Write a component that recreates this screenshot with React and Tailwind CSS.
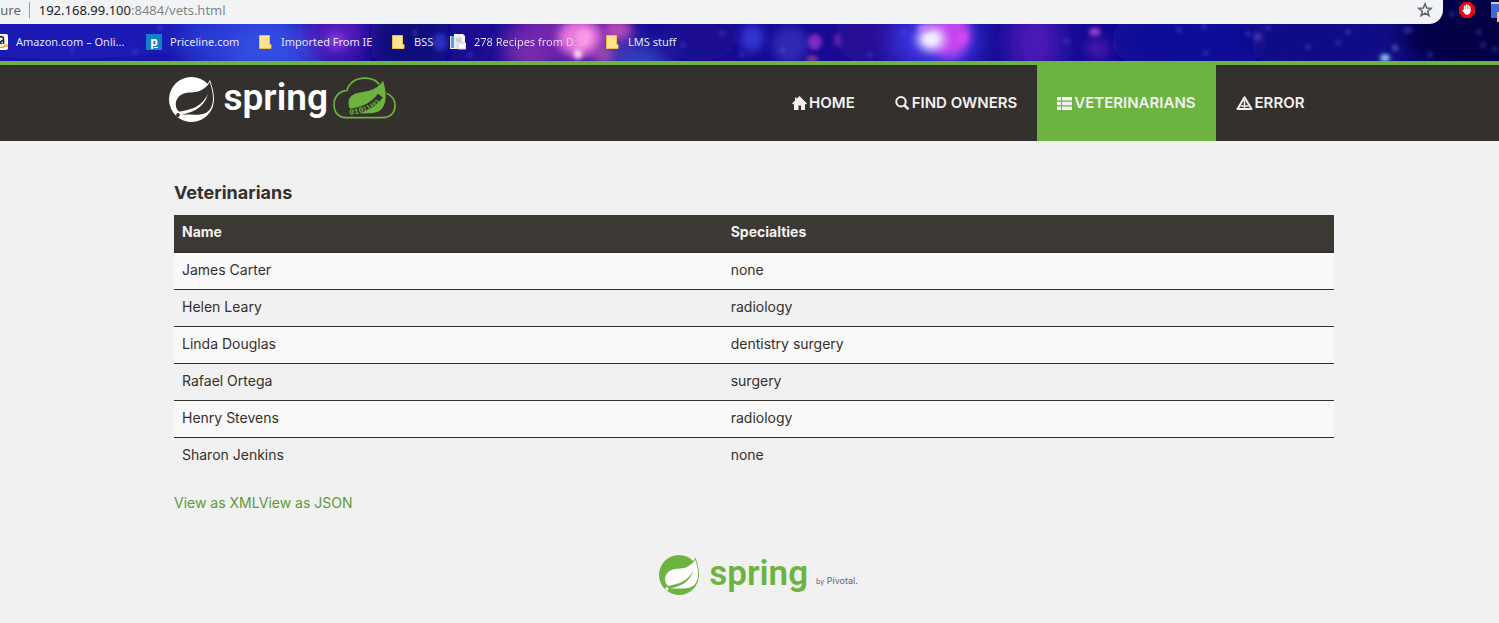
const vets = [
  ["James Carter", "none"],
  ["Helen Leary", "radiology"],
  ["Linda Douglas", "dentistry surgery"],
  ["Rafael Ortega", "surgery"],
  ["Henry Stevens", "radiology"],
  ["Sharon Jenkins", "none"],
];

// cx, cy, rx, ry, colour, opacity
const clouds = [
  [60, 30, 220, 40, "#1a1fb8", 0.9],
  [240, 40, 60, 40, "#2c3cd8", 0.9],
  [275, 50, 50, 30, "#3450e4", 0.9],
  [340, 35, 34, 26, "#5a1cc0", 0.95],
  [336, 41, 9, 8, "#a848ec", 0.7],
  [410, 40, 40, 40, "#0a0a78", 0.9],
  [440, 42, 8, 9, "#3448e0", 0.6],
  [470, 40, 20, 40, "#1c0c90", 0.9],
  [530, 52, 26, 18, "#9a3cb0", 0.9],
  [570, 35, 60, 30, "#7a28b0", 0.9],
  [580, 38, 22, 18, "#e878dc", 1],
  [578, 54, 4, 5, "#ffd8f8", 1],
  [584, 38, 8, 9, "#ffa8ec", 0.7],
  [618, 30, 14, 10, "#c850b8", 0.9],
  [604, 55, 10, 10, "#c050a8", 0.8],
  [640, 60, 34, 14, "#4058d0", 0.9],
  [700, 36, 40, 25, "#1c0a90", 0.9],
  [752, 38, 12, 14, "#3838d8", 0.9],
  [790, 45, 18, 18, "#3a34c0", 0.7],
  [815, 42, 7, 8, "#9c34d4", 0.8],
  [838, 40, 4, 7, "#9a34cc", 0.8],
  [812, 59, 6, 3, "#b84898", 0.8],
  [870, 35, 35, 30, "#2a0c94", 0.9],
  [935, 40, 46, 34, "#4038e8", 0.9],
  [950, 34, 20, 24, "#c044f0", 1],
  [931, 39, 14, 12, "#e8d8ff", 1],
  [931, 39, 7, 6, "#f4f0ff", 0.9],
  [925, 28, 8, 4, "#e080f8", 0.7],
  [962, 38, 6, 6, "#dc48f0", 0.8],
  [1035, 42, 26, 34, "#5a1cc0", 0.8],
  [1095, 32, 6, 4, "#b850d0", 0.9],
  [1100, 48, 14, 10, "#5c1cb0", 0.7],
  [1190, 40, 80, 34, "#0c0c98", 0.9],
  [1258, 37, 4, 4, "#7a48e8", 0.9],
  [1330, 40, 80, 40, "#08087c", 0.6],
  [1480, 30, 80, 50, "#06063c", 0.9],
  [1385, 58, 5, 4, "#90c8f0", 1],
  [1395, 48, 3, 3, "#5068c8", 0.9],
  [1408, 30, 5, 3, "#4434b8", 0.8],
];

const stars = [
  [72, 50], [135, 52], [160, 28], [415, 33], [470, 55], [683, 45], [722, 33],
  [742, 55], [783, 50], [904, 32], [870, 55], [954, 55], [1066, 41], [1179, 30],
  [1204, 27], [1206, 53], [1248, 34], [1268, 28], [1308, 47], [1338, 43],
  [1348, 32], [1430, 55], [1452, 14], [1479, 32], [1483, 45], [1495, 49],
];

const RING =
  "M21.8537 1.4158a10.4504 10.4504 0 0 1-1.284 2.2471A11.9666 11.9666 0 1 0 3.8518 20.7757l.4445.3951a11.9543 11.9543 0 0 0 19.6316-8.2971c.3457-3.0126-.568-6.8649-2.0742-11.458z";
const DOT =
  "M5.5805 20.8745a1.0174 1.0174 0 1 1-.1482-1.4323 1.0396 1.0396 0 0 1 .1482 1.4323z";
const LEAF =
  "M21.7796 17.2939c-2.9385 3.9263-9.2601 2.5928-13.2852 2.7904 0 0-.7161.0494-1.4323.1481 0 0 .2717-.1234.6174-.2469 2.8398-.9877 4.1732-1.1853 5.9018-2.0743 3.2349-1.6545 6.4698-5.2844 7.1118-9.0379-1.2347 3.6053-4.9881 6.7167-8.3959 7.9761-2.3459.8643-6.5685 1.7039-6.5685 1.7039l-.1729-.0988c-2.8645-1.4076-2.9632-7.6304 2.2718-9.6306 2.2966-.889 4.4696-.395 6.9637-.9877 2.6422-.6174 5.7043-2.5929 6.939-5.1857 1.3828 4.1732 3.062 10.643.0493 14.6434z";

function SpringMark({ className, ring, leaf }) {
  return (
    <svg viewBox="0 0 24 24" className={className} aria-hidden="true">
      <path d={RING} fill={ring} />
      <path d={DOT} fill={leaf} />
      <path d={LEAF} fill={leaf} />
    </svg>
  );
}

function CloudMark() {
  return (
    <svg viewBox="0 0 190 126" className="h-[42px] w-[63px]" aria-hidden="true">
      <path
        d="M38 122 C18 122 3 108 3 82 C3 58 20 42 42 40 C48 18 68 3 96 3 C122 3 142 14 148 44 C172 50 187 64 187 86 C187 108 172 122 150 122 Z"
        fill="none"
        stroke="#6db33f"
        strokeWidth="5"
      />
      <path
        d="M151 7 C164 44 166 84 142 102 C130 111 108 111 84 111 L50 96 C42 82 42 60 64 50 C86 40 132 46 151 7 Z"
        fill="#6db33f"
        stroke="#34302d"
        strokeWidth="3"
      />
      <path d="M44 105 Q108 102 143 56" fill="none" stroke="#34302d" strokeWidth="18" />
      <path id="bits" d="M50 114 Q112 110 152 58" fill="none" />
      <text fill="#6db33f" className="font-['Liberation_Mono',monospace] font-bold">
        <textPath href="#bits">
          <tspan fontSize="25">010</tspan>
          <tspan fontSize="21">11</tspan>
          <tspan fontSize="17">001</tspan>
        </textPath>
      </text>
    </svg>
  );
}

function HomeIcon() {
  return (
    <svg viewBox="0 0 15 14" className="h-[14px] w-[15px]" fill="currentColor" aria-hidden="true">
      <path d="M7.5 0 15 7.5l-.8.8H13V14H9V9.500H6.500V14H2V8.300H.8L0 7.500 3 4.500V1.500h1.500v1.500z" />
    </svg>
  );
}

function SearchIcon() {
  return (
    <svg viewBox="0 0 15 14" className="h-[14px] w-[15px]" fill="none" stroke="currentColor" aria-hidden="true">
      <circle cx="6" cy="5.800" r="4.700" strokeWidth="2" />
      <path d="m9.500 9.300 4 4" strokeWidth="2.600" />
    </svg>
  );
}

function ListIcon() {
  return (
    <svg viewBox="0 0 15 13" className="h-[13px] w-[15px]" fill="currentColor" aria-hidden="true">
      <path d="M0 0h4v3.500H0zM5 0h10v3.500H5zM0 4.800h4v3.500H0zM5 4.800h10v3.500H5zM0 9.500h4V13H0zM5 9.500h10V13H5z" />
    </svg>
  );
}

function WarningIcon() {
  return (
    <svg viewBox="0 0 17 14" className="h-[14px] w-[17px]" fill="none" stroke="currentColor" aria-hidden="true">
      <path d="M8.500 1.200 15.500 13H1.500z" strokeWidth="2" strokeLinejoin="round" />
      <path d="M8.500 4v9M4.500 10h8" strokeWidth="1.500" />
    </svg>
  );
}

function Folder() {
  return (
    <svg viewBox="0 0 13 14" className="h-[14px] w-[13px]" aria-hidden="true">
      <path d="M.5.5h10v9h1.500v4H.5z" fill="#ffe48f" stroke="#e8bf4a" />
    </svg>
  );
}

function Bookmark({ icon, className, children }) {
  return (
    <a href="#" className={"flex shrink-0 items-center whitespace-nowrap " + className}>
      {icon}
      {children}
    </a>
  );
}

function hazeFor(rx) {
  if (rx >= 24) return "url(#haze-wide)";
  if (rx >= 9) return "url(#haze)";
  return "url(#glow)";
}

function Galaxy() {
  return (
    <svg
      viewBox="0 0 1499 61"
      preserveAspectRatio="none"
      className="absolute inset-0 h-full w-full"
      aria-hidden="true"
    >
      <defs>
        <filter id="haze-wide" x="-100%" y="-100%" width="300%" height="300%">
          <feGaussianBlur stdDeviation="12" />
        </filter>
        <filter id="haze" x="-100%" y="-100%" width="300%" height="300%">
          <feGaussianBlur stdDeviation="5" />
        </filter>
        <filter id="glow" x="-100%" y="-100%" width="300%" height="300%">
          <feGaussianBlur stdDeviation="2" />
        </filter>
      </defs>
      <rect width="1499" height="61" fill="#160c94" />
      {clouds.map(([cx, cy, rx, ry, fill, opacity], i) => (
        <ellipse key={i} cx={cx} cy={cy} rx={rx} ry={ry} fill={fill} opacity={opacity} filter={hazeFor(rx)} />
      ))}
      {stars.map(([cx, cy], i) => (
        <circle key={i} cx={cx} cy={cy} r="2" fill="#5a60e0" opacity="0.8" filter="url(#glow)" />
      ))}
    </svg>
  );
}

function BrowserBar() {
  return (
    <div className="relative overflow-hidden font-['Noto_Sans',sans-serif]">
      <Galaxy />
      <div className="relative flex h-6 items-start">
        <div className="mr-4 flex h-6 flex-1 items-center rounded-br-[14px] bg-[#f1f3f4] pr-[10px] text-[13px] leading-5">
          <span className="-ml-[6px] pb-1 text-[#5f6368]">cure</span>
          <span className="mr-[9px] mb-1 ml-2 h-4 w-px bg-[#9aa0a6]" />
          <span className="flex-1 pb-1 text-[#80868b]">
            <span className="text-[#202124]">192.168.99.100</span>:8484/vets.html
          </span>
          <button type="button" aria-label="Bookmark this page" className="pb-1">
            <svg viewBox="0 0 16 16" className="size-4" fill="none" stroke="#5f6368" strokeWidth="1.500">
              <path d="m8 1.800 1.700 4.200 4.500.3-3.500 2.900 1.200 4.500L8 11.200l-3.900 2.500 1.200-4.500L1.800 6.300l4.500-.3z" />
            </svg>
          </button>
        </div>
        <button type="button" aria-label="Ad blocker" className="mt-[2px]">
          <svg viewBox="0 0 16 16" className="size-4">
            <path d="M4.700 0h6.600L16 4.700v6.600L11.300 16H4.700L0 11.300V4.700z" fill="#e30b12" />
            <path
              d="M5.500 8.800V4.200M7.300 8V3M9.100 8V3.300M10.900 8.500V4.800M4 8.500l2.300 2.500"
              stroke="#fff"
              strokeWidth="1.400"
              strokeLinecap="round"
            />
            <path d="M4.800 7.500h6.800c0 3.200-.9 5.200-3.200 5.200-2 0-3-1.700-3.600-3.500z" fill="#fff" />
          </svg>
        </button>
        <svg viewBox="0 0 8 22" className="ml-4 h-[22px] w-2" aria-hidden="true">
          <path d="M0 2h8v3H0z" fill="#c8ccd4" />
          <path d="M0 4h8v14H0z" fill="#3a6ad4" />
          <path d="M6 12h2v10H6z" fill="#fbc94a" />
        </svg>
      </div>
      <nav className="relative flex h-[37px] items-center pb-px text-[11px] text-[#e4e4f8]">
        <Bookmark
          className="w-[146px]"
          icon={
            <svg viewBox="0 0 8 16" className="mr-2 h-4 w-2" aria-hidden="true">
              <path d="M0 0h6a2 2 0 0 1 2 2v12a2 2 0 0 1-2 2H0z" fill="#fff" />
              <path d="M0 3c2-1 3.500 0 3.500 2v5M3 6.500C0 6.500 0 10 2 9.500" fill="none" stroke="#222" strokeWidth="1.600" />
              <path d="M0 13.500c3 0 5-1 6.500-2.500M4.500 11H7v2" fill="none" stroke="#f90" strokeWidth="1.200" />
            </svg>
          }
        >
          Amazon.com – Onli...
        </Bookmark>
        <Bookmark
          className="w-[113px]"
          icon={
            <span className="mr-2 flex size-4 items-center justify-center bg-[#1580c4] text-xs leading-4 font-bold text-white underline">
              p
            </span>
          }
        >
          Priceline.com
        </Bookmark>
        <Bookmark className="w-[133px] gap-[9px]" icon={<Folder />}>
          Imported From IE
        </Bookmark>
        <Bookmark className="w-[58px] gap-[9px]" icon={<Folder />}>
          BSS
        </Bookmark>
        <Bookmark
          className="w-[156px]"
          icon={
            <svg viewBox="0 0 16 16" className="mr-2 size-4" aria-hidden="true">
              <path d="M4 0h9l2 2v11H4z" fill="#f4f4f8" />
              <path d="M0 2h10v13H0z" fill="#e4e8f0" />
              <path d="M1 2h3v12H1z" fill="#5aa0d0" />
              <path d="M8 9h8v6H8z" fill="#fff" stroke="#c8c8d4" />
              <path d="M6 5h6M6 7h6" stroke="#b0b4c4" />
            </svg>
          }
        >
          <span className="bg-gradient-to-r from-[#e4e4f8] from-80% to-[#e4e4f8]/60 bg-clip-text text-transparent">
            278 Recipes from D...
          </span>
        </Bookmark>
        <Bookmark className="gap-[9px]" icon={<Folder />}>
          LMS stuff
        </Bookmark>
      </nav>
    </div>
  );
}

function NavItem({ icon, active, children }) {
  return (
    <a
      href="#"
      aria-current={active ? "page" : undefined}
      className={"flex items-center gap-0.5 px-5 " + (active ? "bg-[#6db33f]" : "")}
    >
      {icon}
      {children}
    </a>
  );
}

export default function App() {
  return (
    <div className="min-h-screen bg-[#f1f1f1] text-[#34302d]">
      <BrowserBar />
      <header className="border-t-4 border-[#6db33f] bg-[#34302d]">
        <div className="mx-auto flex h-[76px] max-w-[1170px] items-stretch justify-between pr-[10px] pl-1">
          <a href="#" aria-label="Spring" className="flex items-start pt-3 text-white">
            <SpringMark className="mr-[10px] size-[45px]" ring="#fff" leaf="#34302d" />
            <span className="mr-[5px] font-[Roboto,sans-serif] text-[37px] leading-[42px] font-semibold">spring</span>
            <CloudMark />
          </a>
          <nav className="flex font-[Inter,sans-serif] text-[15px] font-semibold text-[#f1f1f1]">
            <NavItem icon={<HomeIcon />}>HOME</NavItem>
            <NavItem icon={<SearchIcon />}>FIND OWNERS</NavItem>
            <NavItem icon={<ListIcon />} active>VETERINARIANS</NavItem>
            <NavItem icon={<WarningIcon />}>ERROR</NavItem>
          </nav>
        </div>
      </header>
      <main className="mx-auto box-content max-w-[1160px] pt-10 pl-[9px] font-[Inter,sans-serif] text-sm leading-5">
        <h2 className="mb-[10px] text-lg leading-6 font-bold">Veterinarians</h2>
        <table className="w-full table-fixed text-left">
          <thead>
            <tr className="border-b-2 border-[#34302d] bg-[#3c3834] text-[#f1f1f1]">
              <th className="w-[47.300%] px-2 pt-[7px] pb-[9px] font-bold">Name</th>
              <th className="px-2 pt-[7px] pb-[9px] font-bold">Specialties</th>
            </tr>
          </thead>
          <tbody>
            {vets.map(([name, specialties]) => (
              <tr key={name} className="border-b border-[#34302d] odd:bg-[#f9f9f9] last:border-b-0">
                <td className="px-2 pt-[7px] pb-[9px]">{name}</td>
                <td className="px-2 pt-[7px] pb-[9px]">{specialties}</td>
              </tr>
            ))}
          </tbody>
        </table>
        <p className="mt-[19px] text-[#5f9a37]">
          <a href="#">View as XML</a>
          <a href="#">View as JSON</a>
        </p>
      </main>
      <footer className="flex items-start justify-center pt-[42px] pl-[18px]">
        <SpringMark className="mr-[10px] size-10" ring="#6db33f" leaf="#fff" />
        <span className="mr-2 font-[Roboto,sans-serif] text-[35px] leading-[38px] font-semibold text-[#6db33f]">spring</span>
        <span className="pt-5 font-[Inter,sans-serif] text-[9px] leading-3 text-[#666]">
          <span className="text-[7px]">by</span> Pivotal.
        </span>
      </footer>
    </div>
  );
}
